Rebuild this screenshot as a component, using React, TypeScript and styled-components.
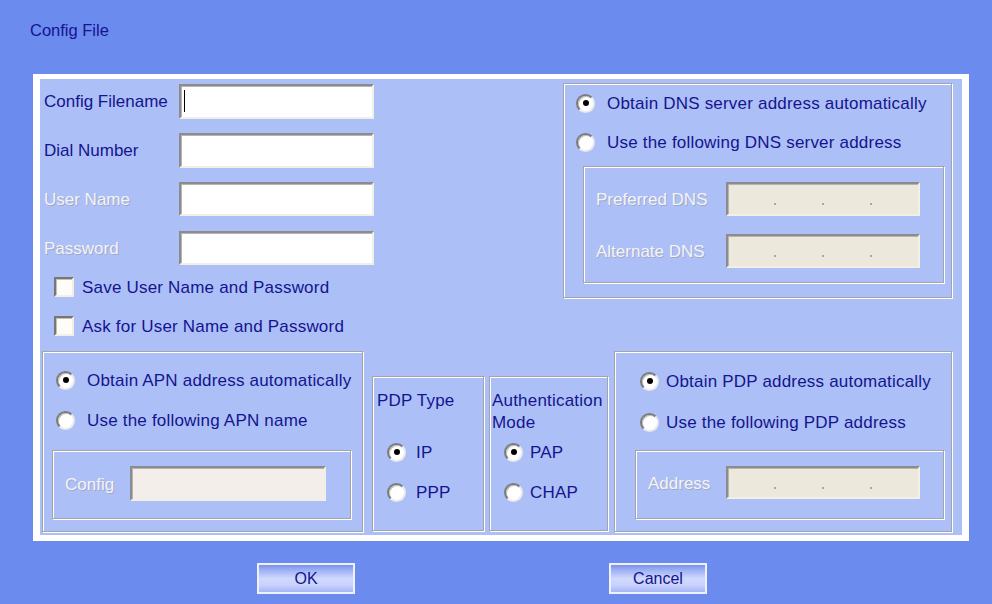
import React from "react";
import styled, { createGlobalStyle } from "styled-components";

const Global = createGlobalStyle`
  html, body { margin: 0; padding: 0; }
  body {
    background: #6b8bee;
    font-family: "Liberation Sans", Arial, sans-serif;
  }
`;

const NAVY = "#14148e";

const Page = styled.div`
  width: 992px;
  height: 604px;
  background: #6b8bee;
  display: flex;
  flex-direction: column;
  font-size: 17px;
  letter-spacing: 0.2px;
  color: ${NAVY};
`;

const Title = styled.div`
  padding: 20px 0 0 30px;
  line-height: 20px;
  height: 20px;
  font-size: 16.5px;
  letter-spacing: 0;
`;

const Frame = styled.div`
  box-sizing: border-box;
  margin: 34px 0 0 33px;
  width: 936px;
  height: 467px;
  border-style: solid;
  border-color: #ffffff;
  border-width: 5px 7px 6px 7px;
  background: #adbff7;
  display: flex;
  flex-direction: column;
  padding: 4px 10px 0 2px;
`;

const TopRow = styled.div`
  display: flex;
  justify-content: space-between;
  height: 268px;
`;

const LeftForm = styled.div`
  display: flex;
  flex-direction: column;
  padding: 1px 0 0 2px;
`;

const FieldGrid = styled.div`
  display: grid;
  grid-template-columns: 135px 195px;
  grid-auto-rows: 34px;
  row-gap: 15px;
  align-items: center;
`;

const Label = styled.span<{ $disabled?: boolean }>`
  white-space: nowrap;
  padding-top: 2px;
  letter-spacing: 0;
  color: ${(p) => (p.$disabled ? "#f2f4fa" : NAVY)};
  text-shadow: ${(p) => (p.$disabled ? "1px 1px 0 #a2a8c0" : "none")};
`;

const Text = styled.span`
  padding-top: 2px;
`;

const TextBox = styled.div<{ $bg?: string; $h?: number; $w?: number }>`
  box-sizing: border-box;
  width: ${(p) => (p.$w ? `${p.$w}px` : "100%")};
  height: ${(p) => p.$h ?? 34}px;
  background: ${(p) => p.$bg ?? "#ffffff"};
  border-style: solid;
  border-width: 2px;
  border-color: #8c8c8c #f2efe6 #f2efe6 #8c8c8c;
  box-shadow: inset 1px 1px 0 #b4b4b4;
  display: flex;
  align-items: center;
`;

const Caret = styled.span`
  display: block;
  width: 1px;
  height: 22px;
  margin-left: 3px;
  background: #000;
`;

const IpSegment = styled.span`
  flex: 1;
`;

const IpDot = styled.span`
  width: 2px;
  height: 2px;
  margin-top: 10px;
  background: #a8a8a8;
`;

const CheckList = styled.div`
  display: flex;
  flex-direction: column;
  gap: 19px;
  margin-top: 12px;
  padding-left: 10px;
`;

const CheckRow = styled.div`
  display: flex;
  align-items: center;
  height: 20px;
  gap: 8px;
  white-space: nowrap;
`;

const CheckBox = styled.span`
  box-sizing: border-box;
  width: 20px;
  height: 20px;
  background: #fdfcf8;
  border-style: solid;
  border-width: 2px;
  border-color: #767676 #f3efe2 #f3efe2 #767676;
  box-shadow: inset 1px 1px 0 #c4c0b6;
`;

const GroupBox = styled.div<{
  $w: number;
  $h: number;
  $pad: string;
  $mt?: number;
  $ml?: number;
}>`
  box-sizing: border-box;
  width: ${(p) => p.$w}px;
  height: ${(p) => p.$h}px;
  margin-top: ${(p) => p.$mt ?? 0}px;
  margin-left: ${(p) => p.$ml ?? 0}px;
  flex-shrink: 0;
  border: 1px solid #a3a3a8;
  box-shadow: inset 1px 1px 0 #ffffff, 1px 1px 0 #ffffff;
  display: flex;
  flex-direction: column;
  padding: ${(p) => p.$pad};
`;

const RadioList = styled.div<{ $gap: number; $pl: number }>`
  display: flex;
  flex-direction: column;
  gap: ${(p) => p.$gap}px;
  padding-left: ${(p) => p.$pl}px;
`;

const RadioRow = styled.div<{ $gap: number }>`
  display: flex;
  align-items: center;
  height: 24px;
  gap: ${(p) => p.$gap}px;
  white-space: nowrap;
`;

const RadioCircle = styled.span<{ $checked?: boolean }>`
  box-sizing: border-box;
  width: 19px;
  height: 19px;
  flex-shrink: 0;
  border-radius: 50%;
  background: #ffffff;
  border-style: solid;
  border-width: 2px;
  border-color: #7c7c7c #ebebeb #ebebeb #7c7c7c;
  box-shadow: inset 1px 1px 0 #c2c2c2;
  display: flex;
  align-items: center;
  justify-content: center;
  &::after {
    content: "";
    display: ${(p) => (p.$checked ? "block" : "none")};
    width: 6px;
    height: 6px;
    border-radius: 50%;
    background: #000;
  }
`;

const SubBox = styled.div<{
  $w: number;
  $h: number;
  $mt: number;
  $ml: number;
  $pad: string;
}>`
  box-sizing: border-box;
  width: ${(p) => p.$w}px;
  height: ${(p) => p.$h}px;
  margin-top: ${(p) => p.$mt}px;
  margin-left: ${(p) => p.$ml}px;
  border: 1px solid #a3a3a8;
  box-shadow: inset 1px 1px 0 #ffffff, 1px 1px 0 #ffffff;
  padding: ${(p) => p.$pad};
`;

const SubGrid = styled.div<{ $labelW: number; $inputW: number; $rowH: number }>`
  display: grid;
  grid-template-columns: ${(p) => p.$labelW}px ${(p) => p.$inputW}px;
  grid-auto-rows: ${(p) => p.$rowH}px;
  row-gap: 18px;
  align-items: center;
`;

const BottomRow = styled.div`
  display: flex;
  align-items: flex-start;
  height: 181px;
`;

const SmallHeader = styled.div<{ $pl: number }>`
  height: 44px;
  line-height: 22px;
  padding-top: 1px;
  padding-left: ${(p) => p.$pl}px;
  margin-bottom: 6px;
`;

const ButtonRow = styled.div`
  display: flex;
  gap: 254px;
  padding: 22px 0 0 257px;
`;

const Button = styled.button`
  box-sizing: border-box;
  width: 98px;
  height: 31px;
  border: 2px solid #eef1ff;
  padding: 1px 0 0 0;
  font-family: "Liberation Sans", Arial, sans-serif;
  font-size: 16px;
  color: ${NAVY};
  background: linear-gradient(
    to bottom,
    #7b92ec 0%,
    #a3b4f5 22%,
    #cfd8fd 50%,
    #c9d2fc 75%,
    #a6b6f5 100%
  );
`;

const IpBox: React.FC<{ h?: number; w?: number }> = ({ h = 34, w }) => (
  <TextBox $bg="#ece9dc" $h={h} $w={w}>
    <IpSegment />
    <IpDot />
    <IpSegment />
    <IpDot />
    <IpSegment />
    <IpDot />
    <IpSegment />
  </TextBox>
);

const Radio: React.FC<{ label: string; checked?: boolean; gap: number }> = ({
  label,
  checked,
  gap,
}) => (
  <RadioRow $gap={gap}>
    <RadioCircle $checked={checked} />
    <Text>{label}</Text>
  </RadioRow>
);

export default function App() {
  return (
    <Page>
      <Global />
      <Title>Config File</Title>
      <Frame>
        <TopRow>
          <LeftForm>
            <FieldGrid>
              <Label>Config Filename</Label>
              <TextBox $h={35}>
                <Caret />
              </TextBox>
              <Label>Dial Number</Label>
              <TextBox $h={35} />
              <Label $disabled>User Name</Label>
              <TextBox />
              <Label $disabled>Password</Label>
              <TextBox />
            </FieldGrid>
            <CheckList>
              <CheckRow>
                <CheckBox />
                <Text>Save User Name and Password</Text>
              </CheckRow>
              <CheckRow>
                <CheckBox />
                <Text>Ask for User Name and Password</Text>
              </CheckRow>
            </CheckList>
          </LeftForm>

          <GroupBox $w={389} $h={215} $pad="7px 0 0 0">
            <RadioList $gap={15} $pl={12}>
              <Radio label="Obtain DNS server address automatically" checked gap={12} />
              <Radio label="Use the following DNS server address" gap={12} />
            </RadioList>
            <SubBox $w={361} $h={117} $mt={12} $ml={19} $pad="15px 0 0 12px">
              <SubGrid $labelW={130} $inputW={194} $rowH={34}>
                <Label $disabled>Preferred DNS</Label>
                <IpBox />
                <Label $disabled>Alternate DNS</Label>
                <IpBox />
              </SubGrid>
            </SubBox>
          </GroupBox>
        </TopRow>

        <BottomRow>
          <GroupBox $w={321} $h={181} $pad="16px 0 0 0">
            <RadioList $gap={16} $pl={13}>
              <Radio label="Obtain APN address automatically" checked gap={12} />
              <Radio label="Use the following APN name" gap={12} />
            </RadioList>
            <SubBox $w={299} $h={69} $mt={18} $ml={9} $pad="15px 0 0 12px">
              <SubGrid $labelW={65} $inputW={196} $rowH={35}>
                <Label $disabled>Config</Label>
                <TextBox $bg="#f4eeeb" $h={35} />
              </SubGrid>
            </SubBox>
          </GroupBox>

          <GroupBox $w={112} $h={155} $mt={25} $ml={9} $pad="12px 0 0 0">
            <SmallHeader $pl={4}>PDP Type</SmallHeader>
            <RadioList $gap={16} $pl={14}>
              <Radio label="IP" checked gap={10} />
              <Radio label="PPP" gap={10} />
            </RadioList>
          </GroupBox>

          <GroupBox $w={119} $h={155} $mt={25} $ml={5} $pad="12px 0 0 0">
            <SmallHeader $pl={2}>
              Authentication
              <br />
              Mode
            </SmallHeader>
            <RadioList $gap={16} $pl={14}>
              <Radio label="PAP" checked gap={7} />
              <Radio label="CHAP" gap={7} />
            </RadioList>
          </GroupBox>

          <GroupBox $w={338} $h={181} $mt={0} $ml={6} $pad="17px 0 0 0">
            <RadioList $gap={17} $pl={25}>
              <Radio label="Obtain PDP address automatically" checked gap={7} />
              <Radio label="Use the following PDP address" gap={7} />
            </RadioList>
            <SubBox $w={309} $h={69} $mt={16} $ml={20} $pad="15px 0 0 12px">
              <SubGrid $labelW={78} $inputW={194} $rowH={33}>
                <Label $disabled>Address</Label>
                <IpBox h={33} />
              </SubGrid>
            </SubBox>
          </GroupBox>
        </BottomRow>
      </Frame>
      <ButtonRow>
        <Button>OK</Button>
        <Button>Cancel</Button>
      </ButtonRow>
    </Page>
  );
}
